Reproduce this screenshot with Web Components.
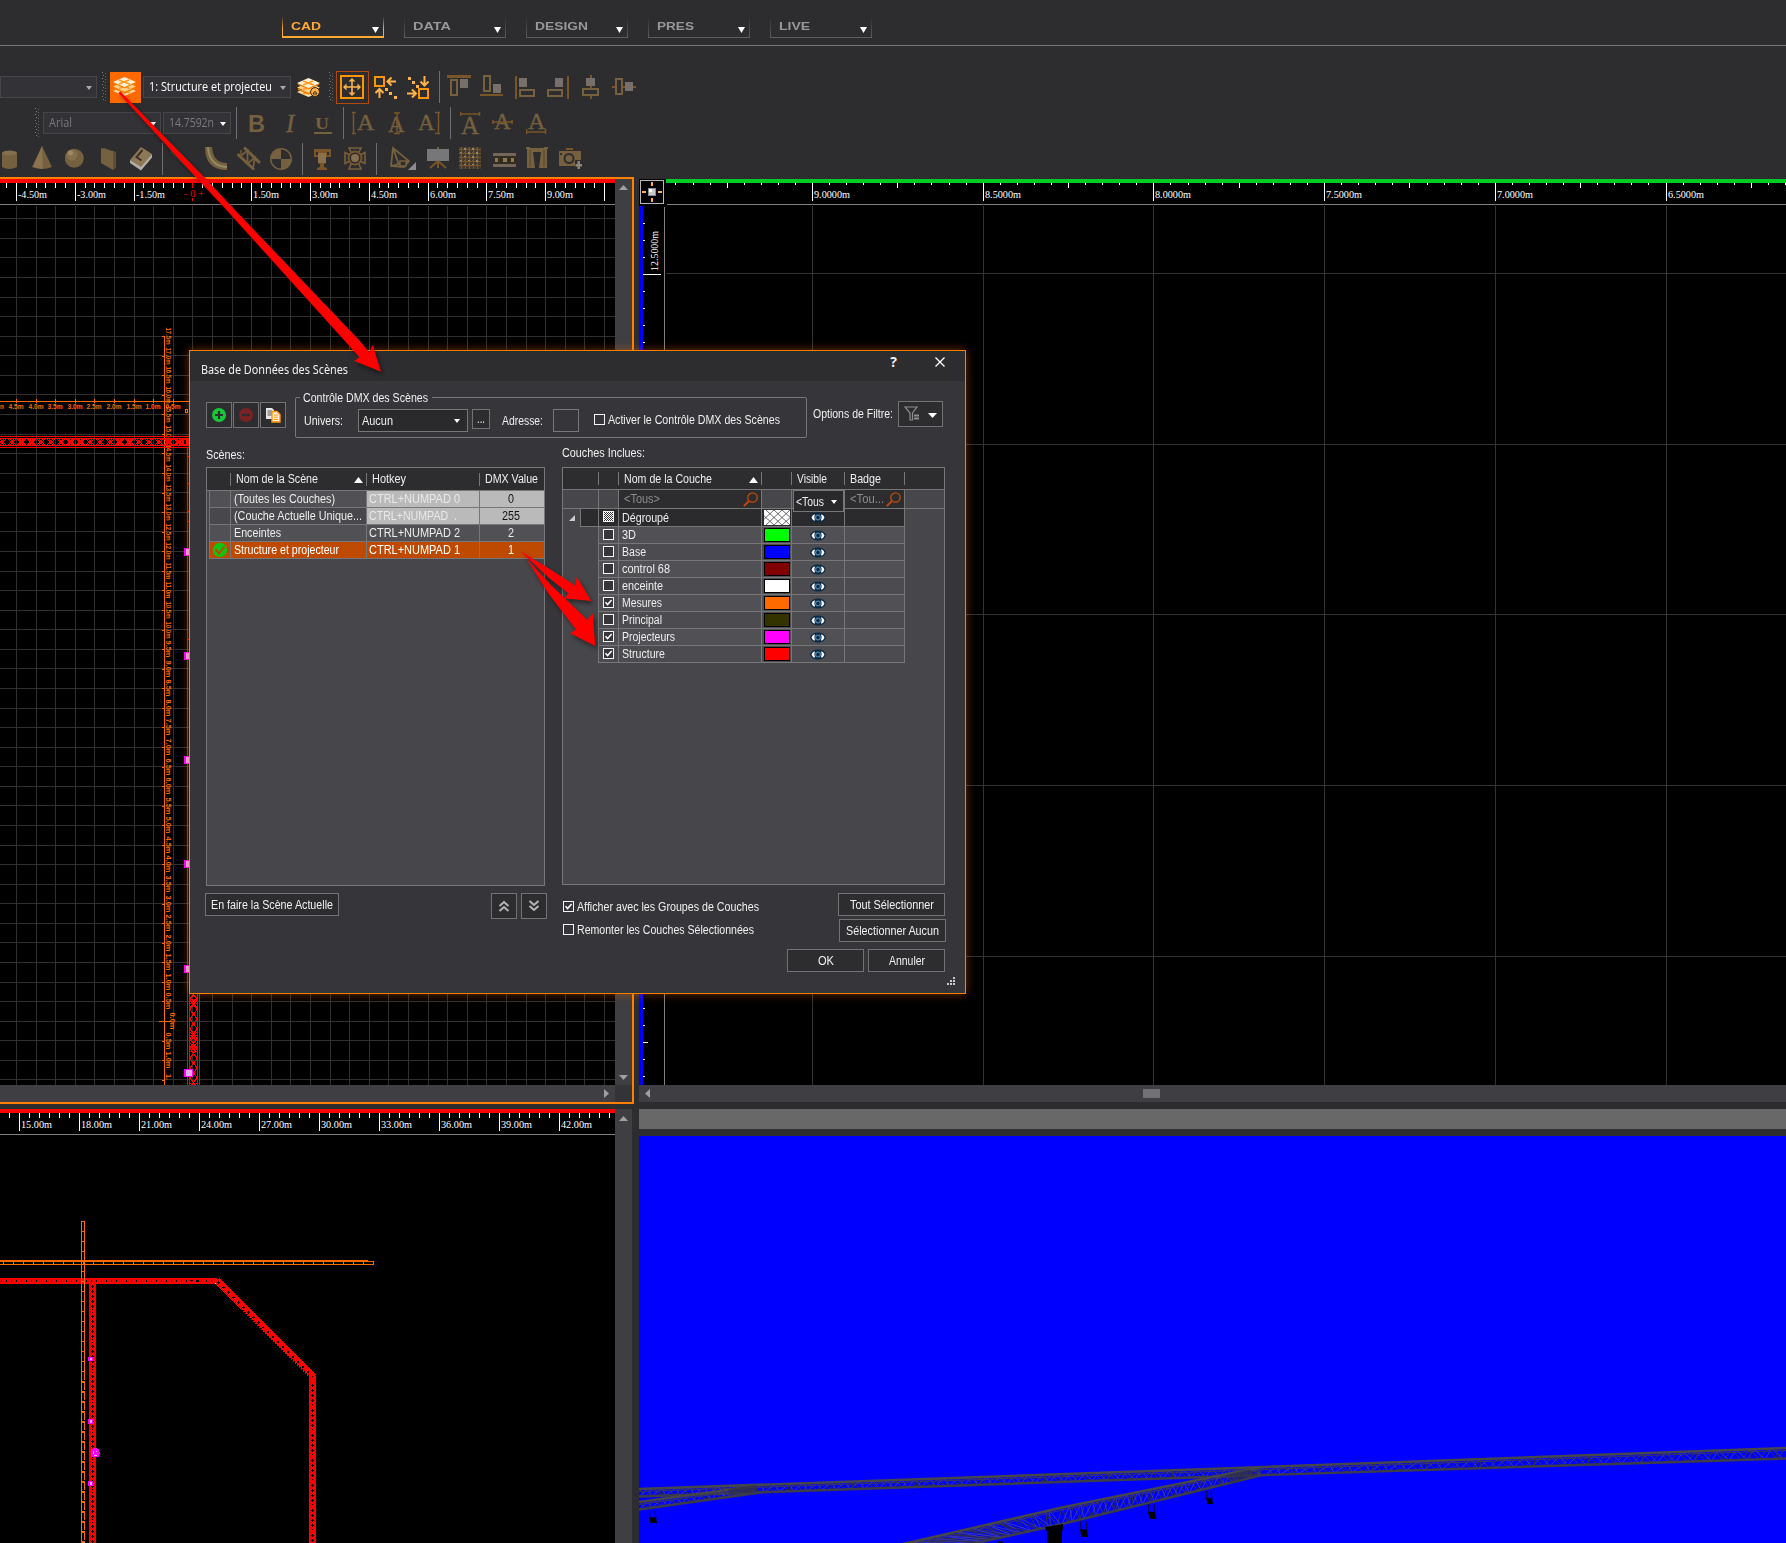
<!DOCTYPE html>
<html lang="fr"><head><meta charset="utf-8"><title>Base de Données des Scènes</title>
<style>
html,body{margin:0;padding:0;background:#2d2d2f;overflow:hidden}
body{width:1786px;height:1543px;position:relative;font-family:"Liberation Sans",sans-serif}
</style></head><body>
<cad-app></cad-app>
<script>
const define=(name,css,render)=>customElements.define(name,class extends HTMLElement{
  connectedCallback(){
    if(this.shadowRoot)return;
    const r=this.attachShadow({mode:'open'});
    r.innerHTML='<style>'+css+'</style>'+render(this);
  }
});
const range=(a,b)=>Array.from({length:b-a+1},(_,i)=>a+i);
const R=(x,y,w,h,f)=>`<rect x="${x}" y="${y}" width="${w}" height="${h}" fill="${f}"/>`;
const P=(d,f='none',s='none',w=1)=>`<path d="${d}" fill="${f}" stroke="${s}" stroke-width="${w}"/>`;

/* Text squeezed or stretched to a given width */
customElements.define('fit-text',class extends HTMLElement{
  connectedCallback(){
    if(this.shadowRoot)return;
    const w=+this.getAttribute('w');
    const r=this.attachShadow({mode:'open'});
    r.innerHTML=`<style>:host{display:inline-block;width:${w}px;white-space:nowrap;flex:none}span{display:inline-block;transform-origin:0 50%}</style><span><slot></slot></span>`;
    const s=r.querySelector('span'),m=s.offsetWidth&&s.getBoundingClientRect().width;
    if(m)s.style.transform=`scaleX(${w/m})`;
  }
});

/* ---------- mode tabs ---------- */
define('mode-tab',`:host{display:flex;box-sizing:border-box;width:102px;height:21px;align-items:flex-start;justify-content:space-between;padding:3px 4px 0 9px;
 font:bold 11.5px/13px "Liberation Sans",sans-serif;color:#979797;border:solid;border-width:0 1px 1px;border-image:linear-gradient(#2d2d2f,#5d5d5f) 1}
:host([active]){color:#ffa834;border-width:0 1px 2px;border-image:linear-gradient(#2d2d2f,#ffa834 60%) 1}
fit-text{margin-left:-1px}svg{display:block;margin-top:7px}`,
 ()=>`<slot></slot><svg width="7" height="6"><path d="M0 0H7L3.5 6Z" fill="#fff"/></svg>`);
define('mode-bar',`:host{display:flex;box-sizing:border-box;height:46px;border-bottom:1px solid #77777a;padding:17px 0 0 282px;gap:20px}fit-text{margin-left:-1px}`,
 ()=>[['CAD',30],['DATA',38],['DESIGN',53],['PRES',37],['LIVE',31]].map((t,i)=>`<mode-tab ${i?'':'active'}><fit-text w="${t[1]}">${t[0]}</fit-text></mode-tab>`).join(''));

/* ---------- toolbars ---------- */
define('tool-combo',`:host{display:flex;box-sizing:border-box;height:22px;border:1px solid #46464a;background:#333337;align-items:center;justify-content:space-between;padding:0 4px 1px 5px;
 font:12px "Open Sans",sans-serif;color:#7b7b7f}:host([on]){color:#fff}svg{display:block;margin:2px 0 0 auto}`,
 h=>`<slot></slot><svg width="6" height="4"><path d="M0 0H6L3 4Z" fill="${h.getAttribute('c')||'#aaa'}"/></svg>`);
const A='#ff9500',L='#ffb24a',D='#7a5528',T='#75603f',G='#77706a';
const grip=(x,y)=>range(0,9).map(i=>R(x+(i%2?1:0),y+i*3,1,1,'#77777b')+R(x+3,y+i*3+1,1,1,'#606064')).join('');
const sep=y=>x=>[x,1,R(x,y,1,32,'#6f6f72')];
const stack=(x,y,badge)=>{const one=(yy,c)=>P(`M${x} ${yy+5}L${x+11.5} ${yy}L${x+23} ${yy+5}L${x+11.5} ${yy+10}Z`,c)+P(`M${x+6} ${yy+3}l5 2 5-2M${x+6} ${yy+7}l5-2 6 2`,'none','#ff9a1c',1.6);
 return one(y+9,'#ffdca8')+P(`M${x+1} ${y+11}l10.5 5 10.5-5`,'none','#f08000',1.4)+one(y+4.5,'#ffd08a')+P(`M${x+1} ${y+6}l10.5 4.6 10.5-4.6`,'none','#f08000',1.4)+one(y,'#fff0d8')
 +(badge?`<circle cx="${x+18}" cy="${y+14}" r="4.4" fill="#ffb24a" stroke="#3a2a10"/>`+P(`M${x+16} ${y+16}q2-5 4 0z`,'none','#3a2a10',1):'')};
const letter=(x,y,s,t,extra='')=>`<text x="${x}" y="${y}" font-family="Liberation Serif,serif" font-size="${s}" fill="${T}" stroke="${T}" stroke-width=".4" ${extra}>${t}</text>`;
const ROWS={
1:[69,[
 [0,97,'<tool-combo style="width:97px"></tool-combo>'],
 [102,6,grip(102,72)],
 [110,31,R(110,72,31,31,'#ff6a00')+stack(113,77)],
 [143,148,'<tool-combo on style="width:148px"><fit-text w="123">1: Structure et projecteu</fit-text></tool-combo>'],
 [297,24,stack(297,78,1)],
 [329,6,grip(329,72)],
 [336,33,`<rect x="336.5" y="71.5" width="32" height="32" fill="none" stroke="#b04a10"/><rect x="341" y="76" width="22" height="22" fill="none" stroke="${A}" stroke-width="2"/>`+P('M352 79V95M344 87H360','none',L,1.6)+P('M348.500 81.5L352 78L355.500 81.5ZM348.500 92.500L352 96L355.500 92.500ZM346.500 83.500L343 87L346.500 90.500ZM357.500 83.500L361 87L357.500 90.500Z',L)],
 [374,24,`<rect x="375" y="77" width="9" height="9" fill="none" stroke="${A}" stroke-width="2"/>`+P('M387 81.5H396M391.500 77.500L387.500 81.500L391.500 85.500M379.500 98V89M375.500 93L379.500 89L383.500 93','none',L,2)+R(385,88,3,3,L)+R(389,92,3,3,L)+R(394,96,3,3,L)],
 [407,24,`<rect x="419" y="89" width="9" height="9" fill="none" stroke="${A}" stroke-width="2"/>`+P('M424.500 76V85M420.500 81.500L424.500 85.500L428.500 81.500M407 93.500H416M412 89.500L416 93.500L412 97.500','none',L,2)+R(408,77,3,3,L)+R(412,81,3,3,L)+R(416,85,3,3,L)],
 sep(71)(439),
 [447,25,R(447,75,24,3,D)+P('M451 80H457V95H451Z','none',T,2)+R(460,79,8,9,G)],
 [480,24,R(480,94,23,2,D)+P('M484 76H490V91H484Z','none',T,2)+R(493,84,8,9,G)],
 [515,21,R(515,76,2,23,D)+R(519,78,8,9,G)+P('M520 90H534V96H520Z','none',T,2)],
 [547,23,R(567,76,2,23,D)+R(555,78,8,9,G)+P('M548 90H562V96H548Z','none',T,2)],
 [582,18,R(590,75,2,24,D)+R(586,78,9,8,G)+P('M583 89H598V95H583Z','#2d2d2f',T,2)],
 [612,25,R(612,86,24,2,D)+P('M616 79H622V94H616Z','#2d2d2f',T,2)+R(625,82,8,9,G)]]],
2:[105,[
 [35,6,grip(35,108)],
 [43,118,'<tool-combo c="#fff" style="width:118px"><fit-text w="23">Arial</fit-text></tool-combo>'],
 [163,68,'<tool-combo c="#fff" style="width:68px"><fit-text w="45">14.7592n</fit-text></tool-combo>'],
 sep(107)(236),
 [248,17,`<text x="248" y="132" font-family="Liberation Sans" font-weight="bold" font-size="24" textLength="17" lengthAdjust="spacingAndGlyphs" fill="${T}">B</text>`],
 [284,15,letter(286,132,25,'I','font-style="italic"')],
 [313,20,`<text x="315" y="129" font-family="Liberation Serif" font-weight="bold" font-size="17" textLength="14" lengthAdjust="spacingAndGlyphs" fill="${T}">U</text>`+R(314,132,18,2,T)],
 sep(107)(343),
 [351,24,letter(357,130,24,'A')+P('M352 112.500H356M352 133.500H356M353.500 112V134','none',D,1.5)],
 [387,19,letter(388,132,23,'A')+P('M394 113H400M394 133.500H400M397 112V134','none',D,1.5)],
 [417,24,letter(418,130,23,'A')+P('M435 112.500H440M435 133.500H440M438.500 112V134','none',D,1.5)],
 sep(107)(450),
 [460,21,letter(461,134,25,'A')+P('M460 114H480M460.500 112V116M479.500 112V116','none',D,1.5)],
 [492,22,letter(494,129,23,'A')+P('M492 122H513M493 120V124M512 120V124','none',D,1.5)],
 [526,21,letter(528,129,24,'A')+P('M526 132H546M526.500 129V134M545.500 129V134','none',D,1.5)]]],
3:[141,[
 [1,17,P('M2 153V167Q9 171 17 167V153Z','#75603f')+'<ellipse cx="9.500" cy="153" rx="7.500" ry="2.500" fill="#85704e"/>'],
 [32,20,P('M42 146L52 167Q42 171 32 167Z','#75603f')+P('M42 146L43 169L33 167Z','#8a7350')],
 [65,19,'<circle cx="74.300" cy="158.300" r="9.500" fill="#75603f"/><circle cx="72" cy="155" r="5.500" fill="#85704d"/><circle cx="70.500" cy="153" r="2.500" fill="#a08a64"/>'],
 [100,17,P('M101 148L113 151V170L101 163Z','#75603f')+P('M101 148L105 148L116 152V168L113 170V151Z','#5e4e35')],
 [129,24,P('M130 160L141 147L152 154L141 168Z','#8d7858')+P('M130 160V163L141 170.500L152 157.500V154L141 167Z','#b3afa8')+P('M142.500 150L136.500 157L141.500 160.500','none','#3c3223',2)],
 sep(143)(162),
 [170,22,P('M171 151L191 170','none','#4c4132',3)],
 [205,23,P('M205 147H212Q213 163 227 163V170Q205 170 205 147Z','#75603f')+P('M208 147Q209 166 227 167','none','#918b64',2)],
 [237,24,P('M237.500 154L254 169.500M244 147.500L260 163','none',T,3)+P('M240 156.500L247.500 150.500V163.500L255 157.500L253 168','none',T,1.8)+P('M241 157V150','none',D,1.5)],
 [270,23,`<circle cx="281" cy="159" r="11" fill="${T}"/>`+P('M281 159V149.500A9.500 9.500 0 0 1 290.500 159ZM281 159V168.500A9.500 9.500 0 0 1 271.500 159Z','#2d2d2f')],
 sep(143)(302),
 [313,19,P('M314 149H331V157H326V163L324 164V167L327 168V170H317V168L320 167V164L318 163V157H314Z',D)+R(318,153,8,10,'#8a714c')+R(316,152,2,3,'#2d2d2f')+R(327,152,2,3,'#2d2d2f')],
 [343,24,'<circle cx="355" cy="158" r="6.500" fill="none" stroke="'+D+'" stroke-width="2"/><circle cx="355" cy="158" r="4" fill="#85704d"/>'+P('M351 152L349 148H361L359 152M351 164L349 169H361L359 164M349 154.500L345 152.500V163.500L349 161.500M361 154.500L365 152.500V163.500L361 161.500','none',T,1.6)],
 sep(143)(376),
 [390,27,P('M393 148L409 161L404 167L391 166ZM393 148L399 165M393 148L391 166M391 166L409 161','none',T,1.8)+P('M400 161H406V166H400Z','#2d2d2f',T,1.500)+P('M416 162V170H408Z','#8b8b8d')],
 [427,22,R(427,149,22,12,'#77777a')+R(437,147,2,2,T)+P('M438 161V168M438 161L430 168M438 161L446 168','none',D,2)],
 [459,23,R(459,147,22,22,'#46392b')+range(0,4).map(i=>R(461+i*4,147,1,22,'#80561f')+R(459,149+i*4,22,1,'#80561f')+range(0,4).map(j=>R(460+i*4,148+j*4,2,2,(i+j)%2?'#8d877d':'#6b583a')).join('')).join('')],
 [493,24,R(493,153,23,3,'#73665a')+R(493,164,23,3,'#73665a')+R(493,156,23,8,'#352c20')+R(495,158,3,4,'#8b7656')+R(503,158,4,4,'#8b7656')+R(511,158,3,4,'#8b7656')],
 [525,24,P('M526 147H530V148H544V147H548V149H547V168H539L541 152H533L535 168H527V149H526Z',T)+P('M530 150V167M544 150V167','none','#5a482f',1)],
 [559,23,R(566,148,7,2,D)+P('M559 151H581V166H559Z',T)+'<circle cx="569" cy="158.500" r="4.500" fill="none" stroke="#2d2d2f" stroke-width="2"/>'+R(560,153,2,2,'#2d2d2f')+R(575,160,8,11,'#2d2d2f')+R(575.500,164,6.500,2.500,'#8e8578')+R(577.500,161,2.500,8,'#8e8578')]]]
};
define('tool-row',`:host{display:flex;height:36px;align-items:flex-start}svg{display:block;flex:none}tool-combo{flex:none}`,h=>{
  const [y,items]=ROWS[h.getAttribute('n')];let end=0;
  return items.map(([x,w,c])=>{const m=x-end;end=x+w;
    return c.startsWith('<tool-combo')?c.replace('style="',`style="margin:7px 0 0 ${m}px;`)
      :`<svg width="${w}" height="36" style="margin-left:${m}px" viewBox="${x} ${y} ${w} 36">${c}</svg>`}).join('')});

/* ---------- drawing views ---------- */
const lab=(x,y,w,t,f='#fff',e='')=>`<text x="${x}" y="${y}" font-family="Liberation Serif,serif" font-size="11" fill="${f}" textLength="${w}" lengthAdjust="spacingAndGlyphs" ${e}>${t}</text>`;
const tiny=(x,y,t,e='',w=15)=>`<text x="${x}" y="${y}" font-family="Liberation Sans,sans-serif" font-weight="bold" font-size="6.500" fill="#ff6a00" text-anchor="middle" textLength="${w}" lengthAdjust="spacingAndGlyphs" ${e}>${t}</text>`;
const magenta=(x,y,w,h)=>R(x,y,w,h,'#f0f')+R(x+2,y+1,w-3,h-2,'#eeaaee');
function planView(){
  let s=R(0,179,615,906,'#000');
  range(0,30).forEach(k=>s+=R(Math.round(16+19.6*k),206,1,879,'#303030'));
  range(-5,39).forEach(k=>s+=R(0,Math.round(316.2+19.57*k),615,1,'#303030'));
  s+=R(0,179,615,4,'#f00')+R(0,204,615,1,'#808080');
  range(-1,60).forEach(k=>{const x=Math.round(16+9.8*k);s+=k==18?R(x,183,1,5,'#f00')+R(x,198,1,3,'#f00'):R(x,183,1,k%6?5:18,'#fff')});
  [-4.5,-3,-1.5,null,1.5,3,4.5,6,7.5,9].forEach((v,k)=>{if(v!==null)s+=lab(Math.round(16+58.8*k)+2,198,v<0?29:26,v.toFixed(2)+'m')});
  s+=lab(184,197,20,'- 0 +','#f00');
  /* dimension lines */
  s+=R(164,336,1,749,'#ff6a00')+R(0,401,189,1,'#ff6a00');
  range(0,38).forEach(k=>{const y=Math.round(336+19.57*k);s+=R(162,y,3,1,'#ff6a00');
    const v=Math.abs(17.5-.5*k).toFixed(1)+'m',x=k==35?170:166,cut=k==38;s+=tiny(0,0,cut?'1.':v,`transform="translate(${x} ${cut?y-3:y}) rotate(90)"`,cut?6:17)});
  s+=R(159,1021,12,1,'#ff6a00');
  range(0,8).forEach(k=>{const x=Math.round(16+19.6*k);s+=R(x,399,1,4,'#ff6a00')+tiny(x,409,(4.5-.5*k).toFixed(1)+'m')});
  s+=tiny(2,409,'m','',4)+'<rect x="185.500" y="409.500" width="2" height="3" fill="none" stroke="#ff6a00"/>';
  /* horizontal truss */
  s+=R(0,436,189,1,'#f00')+R(0,438,189,1,'#f00')+R(0,445,189,1,'#f00')+R(0,447,189,1,'#f00');
  range(0,19).forEach(k=>{const x=k*9.8-2;s+=P(`M${x} 439L${x+6} 445M${x+6} 439L${x} 445M${x+2} 439L${x+8} 445M${x+8} 439L${x+2} 445`,'none','#f00',1)});
  s+=R(62,438,1,8,'#f00')+R(179,438,1,8,'#f00')+R(182,439,7,6,'#f00')+R(184,440,2,4,'#000');
  /* vertical truss */
  s+=R(187,447,1,638,'#f00')+[456,483,511,521,639].map(y=>R(188,y,1,1,'#f00')).join('');
  s+=R(189,994,1,91,'#f00')+R(197,994,1,91,'#f00')+R(199,994,1,91,'#f00');
  range(0,9).forEach(k=>{const y=990+k*9.8;s+=P(`M190 ${y}L197 ${y+9}M197 ${y}L190 ${y+9}`,'none','#f00',1.2)});
  [998,1032,1043,1083].forEach(y=>s+=P(`M190 ${y}l7 6M197 ${y}l-7 6M190 ${y+3}l7 6M197 ${y+3}l-7 6`,'none','#f00',1));
  [548,652,756,860,965,1069].forEach((y,i)=>s+=magenta(184,y,i==5?9:7,8));
  return s;
}
function lowerPlan(){
  let s=R(0,1109,615,434,'#000')+R(0,1109,615,4,'#f00')+R(0,1134,615,1,'#808080');
  range(-1,59).forEach(k=>{s+=R(19+10*k,1113,1,k%6?5:18,'#fff')});
  range(0,9).forEach(k=>s+=lab(21+60*k,1128,31,(15+3*k).toFixed(2)+'m'));
  /* red frame */
  const f='#f00',k0='#000';
  s+=R(0,1278,217,6,f)+range(0,42).map(k=>R(1+5*k,1280,1,2,k0)).join('')+R(190,1280,3,1,k0)+R(197,1280,2,2,k0);
  s+=R(89,1284,7,259,f)+range(0,51).map(k=>k%6==5?R(92,1284+5*k,1,1,k0)+R(92,1287+5*k,1,1,k0):R(91,1286+5*k,3,1,k0)+R(92,1285+5*k,1,3,k0)).join('');
  s+=R(309,1376,7,167,f)+range(0,32).map(k=>k%5==4?R(312,1381+5*k,1,1,k0)+R(312,1384+5*k,1,1,k0):R(311,1385+5*k,3,1,k0)+R(312,1384+5*k,1,3,k0)).join('');
  s+=P('M215 1284L219 1278L316 1375L309 1378Z',f)+P('M218 1282L313 1377','none',k0,1.6).replace('/>',' stroke-dasharray="2 5"/>')+P('M217 1284.500L310 1377.500','none',k0,1).replace('/>',' stroke-dasharray="1 1.8"/>')+R(215,1283,1,1,'#fff');
  /* orange dimension ladders */
  const o='#ff6a00';
  s+=R(0,1260,368,2,o)+R(0,1264,374,1,o)+R(368,1261,6,1,o)+R(373,1261,1,4,o)+range(0,36).map(k=>R(3+10*k,1261,1,4,o)).join('');
  s+=R(81,1221,1,322,o)+R(84,1221,1,322,o)+range(0,32).map(k=>R(81,1221+10*k,4,1,o)+(k>15?R(81,1222+10*k,4,1,o)+R(83,1220+10*k,2,1,k0):'')).join('');
  s+=magenta(88,1357,5,4)+magenta(88,1419,5,5)+magenta(88,1481,5,5)+R(91,1449,8,8,'#f0f')+R(93,1448,4,1,'#f0f')+R(99,1452,1,2,'#f0f')+R(93,1451,1,3,'#eeaaee')+R(94,1455,3,1,'#eeaaee')+R(96,1451,1,1,'#eeaaee');
  return s;
}
function sectionView(){
  let s=R(639,179,1147,906,'#000');
  range(0,5).forEach(k=>s+=R(Math.round(812+170.7*k),206,1,879,'#333'));
  range(0,4).forEach(k=>s+=R(666,Math.round(273+170.7*k),1120,1,'#333'));
  s+=R(666,179,1120,4,'#00cc28')+R(667,204,1119,1,'#808080');
  range(-8,57).forEach(k=>{const x=Math.round(812+17.07*k);s+=R(x,183,1,k%10?(k%5?2:5):18,'#fff')});
  range(0,5).forEach(k=>s+=lab(Math.round(812+170.7*k)+2,198,36,(9-.5*k).toFixed(4)+'m'));
  s+=R(639,206,4,879,'#00f')+R(664,207,1,878,'#808080');
  range(-3,47).forEach(k=>s+=R(643,Math.round(274+17.07*k),k%10?(k%5?2:5):18,1,'#fff'));
  s+=lab(0,0,40,'12.5000m','#fff','transform="translate(658 271) rotate(-90)"');
  s+='<rect x="640.500" y="180.500" width="23" height="23" fill="#000" stroke="#b8b8b8"/>'+R(648,188,8,8,'#8d8d8d')+R(649,189,6,6,'#c9c9c9')+R(649,189,3,3,'#fff')+R(651,182,2,4,'#ffb040')+R(651,198,2,4,'#ffb040')+R(642,191,4,2,'#ffb040')+R(658,191,4,2,'#ffb040');
  return s;
}
function truss(t0,t1,b0,b1,n){
  const at=(a,b,u)=>[a[0]+(b[0]-a[0])*u,a[1]+(b[1]-a[1])*u].map(v=>v.toFixed(1)).join(' ');
  let z='M'+at(t0,t1,0),w='M'+at(b0,b1,0),v='';
  for(let i=1;i<=n;i++){z+='L'+(i%2?at(b0,b1,i/n):at(t0,t1,i/n));w+='L'+(i%2?at(t0,t1,(i+.35)/(n+1)):at(b0,b1,(i-.3)/n));if(i%3==0)v+='M'+at(t0,t1,i/n)+'L'+at(b0,b1,i/n)}
  return P(z,'none','#34344c',1)+P(w,'none','#4444a8',.8)+P(v,'none','#2c2c48',.9)
   +P(`M${t0}L${t1}`,'none','#46464a',2.6)+P(`M${b0}L${b1}`,'none','#3c3c48',2.4)+P(`M${t0[0]} ${t0[1]+2.5}L${t1[0]} ${t1[1]+2.5}`,'none','#33336a',1);
}
function scene3d(){
  const lamp=(x,y,w,h)=>P(`M${x+.5} ${y}L${x+1} ${y+h*.6}M${x+w-2} ${y}L${x+w-1} ${y+h*.6}`,'none','#08083a',1)+P(`M${x} ${y+h*.5}L${x+w-1} ${y+h*.55}L${x+w} ${y+h}L${x+1.5} ${y+h}Z`,'#000');
  return R(639,1136,1147,407,'#00f')
   +truss([639,1489],[1265,1467],[639,1496.500],[1265,1475],88)+truss([1265,1467],[1786,1448],[1265,1475],[1786,1458.500],58)
   +truss([639,1502],[756,1486],[639,1509.500],[760,1492.500],16)
   +P('M728 1489L756 1485L758 1492L730 1494Z','#2d2d48').replace('/>',' opacity=".75"/>')
   +truss([899,1545],[1062,1507.500],[965,1545.500],[1062,1524],20)+truss([1062,1507.500],[1262,1467],[1062,1524],[1262,1475],34)
   +P('M1226 1475L1250 1469L1256 1475L1230 1483Z','#2d2d44').replace('/>',' opacity=".6"/>')
   +lamp(649,1511,8,12)+lamp(1206,1491,7,13)+lamp(1148,1504,8,15)+lamp(1080,1521,8,16)+P('M1045 1527L1063 1524V1529L1062 1531V1543H1047V1532Z','#000')+R(998,1541,5,2,'#08083a');
}
const tri={up:'M0 5H9L4.5 0Z',down:'M0 0H9L4.5 5Z',left:'M5 0V9L0 4.500Z',right:'M0 0V9L5 4.500Z'};
define('scroll-arrow',`:host{display:block}svg{display:block}`,h=>{const d=h.getAttribute('dir'),v=d=='up'||d=='down';return `<svg width="${v?9:5}" height="${v?5:9}"><path d="${tri[d]}" fill="#a0a0a3"/></svg>`});
define('scroll-bar',`:host{display:flex;box-sizing:border-box;background:#3f3f43;width:17px;padding:7px 4px;flex-direction:column;align-items:center;justify-content:space-between}
:host([h]){width:auto;height:17px;flex-direction:row;padding:0 6px}i{width:17px;height:9px;background:#727274;margin-right:620px}`,
 h=>({v:'<scroll-arrow dir="up"></scroll-arrow><scroll-arrow dir="down"></scroll-arrow>',u:'<scroll-arrow dir="up"></scroll-arrow>',r:'<span></span><scroll-arrow dir="right"></scroll-arrow>',l:'<scroll-arrow dir="left"></scroll-arrow><i></i>'})[h.getAttribute('kind')]);
const VIEWS={plan:[0,179,615,906,planView],lower:[0,1109,615,434,lowerPlan],section:[639,179,1147,906,sectionView],scene:[639,1136,1147,407,scene3d]};
define('draw-view',`:host{display:block}svg{display:block}`,h=>{const [x,y,w,hh,f]=VIEWS[h.getAttribute('kind')];
 return `<svg width="${w}" height="${hh}" viewBox="${x} ${y} ${w} ${hh}" ${h.getAttribute('kind')=='scene'?'':'shape-rendering="crispEdges"'}>${f()}</svg>`});
define('work-area',`:host{display:flex;gap:5px;height:1366px}
.l{width:634px;display:flex;flex-direction:column;gap:5px}.r{flex:1;display:flex;flex-direction:column}
.top{box-sizing:border-box;height:927px;border:2px solid #ff8000;border-left:0;display:grid;grid-template:906px 17px/615px 17px}
.top scroll-bar[kind=v]{padding-top:6px;padding-bottom:5px}
.c{background:#343438}.bot{display:grid;grid-template:434px/615px 17px}.grey{height:20px;margin:7px 0;background:#686868}.r{padding-top:2px}`,
 ()=>`<div class="l"><div class="top"><draw-view kind="plan"></draw-view><scroll-bar kind="v"></scroll-bar><scroll-bar h kind="r"></scroll-bar><div class="c"></div></div>
 <div class="bot"><draw-view kind="lower"></draw-view><scroll-bar kind="u"></scroll-bar></div></div>
 <div class="r"><draw-view kind="section"></draw-view><scroll-bar h kind="l"></scroll-bar><div class="grey"></div><draw-view kind="scene"></draw-view></div>`);

/* ---------- dialog ---------- */
define('push-button',`:host{display:flex;box-sizing:border-box;align-items:center;justify-content:center;background:#2d2d30;border:1px solid #727274;color:#f0f0f0;height:23px;flex:none}`,()=>'<slot></slot>');
define('check-box',`:host{display:block;width:11px;height:11px;flex:none}svg{display:block}`,h=>{
 const m=h.getAttribute('state');
 return `<svg width="11" height="11"><rect x=".5" y=".5" width="10" height="10" fill="#35353a" stroke="#f4f4f4"/>${m=='on'?'<path d="M2.500 5.300L4.600 7.600L8.600 3" fill="none" stroke="#fff" stroke-width="1.500"/>':''}${m=='mix'?range(0,8).map(i=>range(0,8).map(j=>(i+j)%2?R(1+i,1+j,1,1,'#fff'):'').join('')).join(''):''}</svg>`});
define('scene-table',`:host{display:block;box-sizing:border-box;width:339px;height:419px;border:1px solid #77777a;background:#47474b;color:#eee}
.row{display:flex;margin-left:2px;height:17px;border-left:1px solid #77777a}
.row>div{box-sizing:border-box;border-right:1px solid #77777a;border-bottom:1px solid #77777a;background:#505055;padding-left:2.500px;line-height:17px;height:17px}
.row>div:nth-child(1){width:21px;padding:0}.row>div:nth-child(2){width:136px}.row>div:nth-child(3){width:113px;padding-left:2px}.row>div:nth-child(4){width:64px;border-right:0;padding:0 2px 0 0;display:flex;justify-content:center}
.row:nth-of-type(odd)>div{background:#47474c}
.row.g>div:nth-child(n+3){background:#bababa;color:#e9e9e9}.row.g>div:nth-child(4){color:#111}
.row.s>div{background:#bd4a00;color:#fff}
.head{display:flex;height:22px;background:#2d2d2f;border-bottom:1px solid #77777a;align-items:center}
.head div{box-sizing:border-box;height:13px;border-right:1px solid #77777a;display:flex;align-items:center;justify-content:space-between;padding:1px 3px 0 5px;line-height:13px}
.head div:nth-child(1){width:24px}.head div:nth-child(2){width:136px}.head div:nth-child(3){width:113px}.head div:nth-child(4){border:0}
svg{display:block}`,()=>`<div class="head"><div></div><div><fit-text w="82">Nom de la Scène</fit-text><svg width="9" height="6"><path d="M0 6H9L4.500 0Z" fill="#fff"/></svg></div><div><fit-text w="34">Hotkey</fit-text></div><div><fit-text w="53">DMX Value</fit-text></div></div>`
+[['(Toutes les Couches)',101,'CTRL+NUMPAD 0',91,'0',6,'g'],['(Couche Actuelle Unique...',128,'CTRL+NUMPAD&nbsp; .',88,'255',18,'g'],['Enceintes',47,'CTRL+NUMPAD 2',91,'2',6,''],['Structure et projecteur',105,'CTRL+NUMPAD 1',91,'1',6,'s']]
.map(r=>`<div class="row ${r[6]}"><div>${r[6]=='s'?'<svg width="20" height="16"><circle cx="10" cy="8" r="7.200" fill="#12c312"/><path d="M5.500 7.500L9 11.500L14.500 4.500" fill="none" stroke="#bd4a00" stroke-width="2"/></svg>':''}</div><div><fit-text w="${r[1]}">${r[0]}</fit-text></div><div><fit-text w="${r[3]}">${r[2]}</fit-text></div><div><fit-text w="${r[5]}">${r[4]}</fit-text></div></div>`).join(''));
const eye='<svg width="16" height="11"><path d="M0 5.500Q2 .5 8 .5T16 5.500Q14 10.500 8 10.500T0 5.500Z" fill="#0b2b45"/><path d="M1.500 5.500Q2.500 2.500 5 2.300Q3.500 5.500 5 8.700Q2.500 8.500 1.500 5.500ZM14.500 5.500Q13.500 2.500 11 2.300Q12.500 5.500 11 8.700Q13.500 8.500 14.500 5.500Z" fill="#fff"/><circle cx="8" cy="5.500" r="3" fill="#4c7ea5"/><circle cx="8" cy="5.500" r="1.700" fill="#0b2b45"/></svg>';
const mag='<svg width="15" height="15"><circle cx="9.500" cy="5.500" r="4.700" fill="none" stroke="#c24a0c" stroke-width="1.300"/><path d="M6 9L.8 14.200" stroke="#c24a0c" stroke-width="1.800"/></svg>';
define('layer-table',`:host{display:block;position:relative;box-sizing:border-box;width:383px;height:418px;border:1px solid #77777a;background:#47474b;color:#eee}
.row{display:flex;margin-left:35px;width:307px;height:17px;border-left:1px solid #77777a;box-sizing:border-box}
.row>div,.fil>div{box-sizing:border-box;border-right:1px solid #77777a;border-bottom:1px solid #77777a;background:#505055;height:100%;line-height:17px;flex:none}
.k{width:20px;padding:2px 0 0 4px}.n{width:143px;padding-left:3px}.w{width:30px;padding:1px 1px 0 2px}.v{width:53px;display:flex;justify-content:center;padding-top:3px}.b{width:60px}
.row:nth-of-type(odd)>div{background:#4b4b50}
.grp{margin-left:0;border:0;width:342px;height:18px}.row.grp>div{background:#2b2b2d}.row.grp .n{line-height:18px}.row.grp>.t{width:18px;background:none;border-bottom:0;padding:6px 0 0 6px}.row.grp>.p{width:18px}
.head{display:flex;height:21px;background:#2d2d2f;border-bottom:1px solid #77777a;align-items:center}
.head div{box-sizing:border-box;height:13px;border-right:1px solid #77777a;display:flex;align-items:center;justify-content:space-between;padding:2px 3px 0 5px;flex:none;line-height:13px}
.fil{display:flex;height:19px}.row svg,.head svg,.fil svg{display:block;flex:none}
.fil>div{background:#47474b;display:flex;align-items:center;justify-content:space-between;padding:0 3px 0 5px}
.fil>.d{background:#2d2d30;color:#8d8d8f}
.pick{position:absolute;left:230px;top:22px;width:51px;height:22px;box-sizing:border-box;border:1px solid #77777a;background:#29292c;display:flex;align-items:center;justify-content:space-between;padding:1px 6px 0 2px}
.sw{height:14px;width:26px;box-sizing:border-box;border:1px solid #000}`,()=>{
 const row=(n,w,c,st,g)=>`<div class="row ${g?'grp':''}">${g?'<div class="t"><svg width="6" height="6"><path d="M6 0V6H0Z" fill="#ccc"/></svg></div><div class="p"></div>':''}<div class="k"><check-box state="${st}"></check-box></div><div class="n"><fit-text w="${w}">${n}</fit-text></div><div class="w">${g?`<svg width="26" height="15"><rect width="26" height="15" fill="#fff"/><path d="M-2 4L10 15M2 0L18 15M10 0L26 15M18 0L28 9M-2 11L10 0M2 15L18 0M10 15L26 0M18 15L28 6" stroke="#444" stroke-width=".8"/></svg>`:`<div class="sw" style="background:${c}"></div>`}</div><div class="v">${eye}</div><div class="b"></div></div>`;
 return `<div class="head"><div style="width:36px"></div><div style="width:20px"></div><div style="width:143px"><fit-text w="88">Nom de la Couche</fit-text><svg width="9" height="6"><path d="M0 6H9L4.500 0Z" fill="#fff"/></svg></div><div style="width:30px"></div><div style="width:53px"><fit-text w="30">Visible</fit-text></div><div style="width:60px"><fit-text w="31">Badge</fit-text></div></div>
 <div class="fil"><div style="width:36px"></div><div style="width:20px"></div><div class="d" style="width:143px"><fit-text w="36">&lt;Tous&gt;</fit-text>${mag}</div><div style="width:30px"></div><div style="width:53px"></div><div class="d" style="width:60px"><fit-text w="34">&lt;Tou...</fit-text>${mag}</div><div style="width:39px;border-right:0"></div></div>`
 +row('Dégroupé',47,'','mix',1)+[['3D',14,'#0f0'],['Base',24,'#00f'],['control 68',48,'#800000'],['enceinte',41,'#fff'],['Mesures',40,'#ff6a00','on'],['Principal',40,'#333300'],['Projecteurs',53,'#f0f','on'],['Structure',43,'#f00','on']].map(r=>row(r[0],r[1],r[2],r[3]||'off')).join('')
 +`<div class="pick"><fit-text w="28">&lt;Tous</fit-text><svg width="6" height="4"><path d="M0 0H6L3 4Z" fill="#fff"/></svg></div>`});
define('scene-dialog',`:host{position:absolute;left:189px;top:350px;width:777px;height:644px;box-sizing:border-box;border:1px solid #ff8000;background:#35353a;box-shadow:0 0 9px rgba(255,100,0,.45);color:#f0f0f0;font:12px/14px "Liberation Sans",sans-serif;display:flex;flex-direction:column}
.title{height:30px;background:#2d2d30;display:flex;padding:0 20px 0 11px;font:12px/37px "Noto Sans",sans-serif}
.title svg{margin:6px 0 0 38px;flex:none}.title b{margin-left:auto;font:bold 14px/22px "Open Sans",sans-serif}
.ctl{display:flex;margin:16px 0 0 16px;height:41px;align-items:flex-start}
.ctl>push-button{width:26px;height:26px;margin:5px 1px 0 0}
.grp{box-sizing:border-box;width:512px;height:41px;margin-left:8px;border:1px solid #77777a;border-radius:2px;padding-left:4px}
.grp .leg{display:block;width:132px;height:14px;margin-top:-7px;background:#35353a;padding-left:3px;box-sizing:border-box}
.grp .r{display:flex;height:23px;margin:4px 0 0 4px;align-items:flex-start;line-height:24px}
.combo{box-sizing:border-box;width:110px;height:23px;border:1px solid #77777a;background:#2a2a2d;margin-left:15px;display:flex;align-items:center;justify-content:space-between;padding:1px 7px 0 3px;line-height:20px}
.in{box-sizing:border-box;width:26px;height:23px;border:1px solid #77777a;margin-left:10px}
.cols{display:flex;margin-left:15px;gap:16px}.lc{width:340px}.rc{width:385px}
.lab{height:29px;box-sizing:border-box;padding:10px 0 0 1px}.rc .lab{padding-top:8px}
scene-table,layer-table{margin-left:1px}
.lb{display:flex;margin-top:7px;align-items:flex-start}.lb push-button+push-button{width:26px;height:26px}
.rb{display:flex;justify-content:space-between;margin:8px 0 0 2px}
.ck{display:flex;align-items:center;gap:3px;height:11px;margin:8px 0 12px}
.ok{display:flex;justify-content:flex-end;gap:4px;margin:2px 1px 0 0}.ok push-button{width:77px}
.grip{align-self:flex-end;margin:5px 10px 0 0;display:block}`,()=>`
<div class="title"><fit-text w="147">Base de Données des Scènes</fit-text><b>?</b><svg width="10" height="10"><path d="M.5 .5L9.500 9.500M9.500 .5L.5 9.500" stroke="#fff" stroke-width="1.300"/></svg></div>
<div class="ctl">
<push-button><svg width="16" height="16"><circle cx="8" cy="8" r="7" fill="#18c838"/><path d="M8 4V12M4 8H12" stroke="#2d2d30" stroke-width="2.200"/></svg></push-button>
<push-button><svg width="16" height="16"><circle cx="8" cy="8" r="7" fill="#7a2224"/><path d="M4 8H12" stroke="#2d2d30" stroke-width="2.200"/></svg></push-button>
<push-button><svg width="16" height="16"><path d="M1 1H7L9 3V12H1Z" fill="#e8e8e8"/><path d="M2.500 4H7M2.500 6H7M2.500 8H7" stroke="#555"/><path d="M7 4.500H12L15 7.500V15H7Z" fill="#fff0dc" stroke="#ff9500" stroke-width="1.400"/><path d="M9 8H13M9 10.200H13M9 12.400H13" stroke="#ff9500"/></svg></push-button>
<div class="grp"><span class="leg"><fit-text w="125">Contrôle DMX des Scènes</fit-text></span>
<div class="r"><fit-text w="39">Univers:</fit-text><div class="combo"><fit-text w="31">Aucun</fit-text><svg width="6" height="4"><path d="M0 0H6L3 4Z" fill="#fff"/></svg></div><push-button style="width:18px;height:20px;margin-left:4px;line-height:16px"><fit-text w="8">...</fit-text></push-button><fit-text w="41" style="margin-left:12px">Adresse:</fit-text><div class="in"></div><check-box state="off" style="margin:5px 3px 0 15px"></check-box><fit-text w="172" style="line-height:23px">Activer le Contrôle DMX des Scènes</fit-text></div></div>
<fit-text w="80" style="margin:10px 5px 0 6px">Options de Filtre:</fit-text>
<push-button style="width:45px;margin-top:4px"><svg width="34" height="18"><path d="M1 2H13L8.500 8V15H6V8Z" fill="none" stroke="#8d8d8f" stroke-width="1.200"/><path d="M10 10.500H15M10 13.500H15" stroke="#8d8d8f" stroke-width="2"/><path d="M24 8H33L28.500 13Z" fill="#fff"/></svg></push-button>
</div>
<div class="cols"><div class="lc"><div class="lab"><fit-text w="39">Scènes:</fit-text></div><scene-table></scene-table>
<div class="lb"><push-button style="width:134px"><fit-text w="122">En faire la Scène Actuelle</fit-text></push-button><push-button style="margin-left:152px"><svg width="12" height="12"><path d="M1.500 6L6 2L10.500 6M1.500 11L6 7L10.500 11" fill="none" stroke="#b4b4b4" stroke-width="2"/></svg></push-button><push-button style="margin-left:4px"><svg width="12" height="12"><path d="M1.500 1L6 5L10.500 1M1.500 6L6 10L10.500 6" fill="none" stroke="#b4b4b4" stroke-width="2"/></svg></push-button></div></div>
<div class="rc"><div class="lab"><fit-text w="83">Couches Inclues:</fit-text></div><layer-table></layer-table>
<div class="rb"><div><div class="ck"><check-box state="on"></check-box><fit-text w="182">Afficher avec les Groupes de Couches</fit-text></div><div class="ck"><check-box state="off"></check-box><fit-text w="177">Remonter les Couches Sélectionnées</fit-text></div></div>
<div><push-button style="width:107px"><fit-text w="84">Tout Sélectionner</fit-text></push-button><push-button style="width:107px;margin:3px 0 0 1px"><fit-text w="93">Sélectionner Aucun</fit-text></push-button></div></div>
<div class="ok"><push-button><fit-text w="16">OK</fit-text></push-button><push-button><fit-text w="36">Annuler</fit-text></push-button></div></div></div>
<svg class="grip" width="8" height="8">${[[6,0],[6,3],[3,3],[6,6],[3,6],[0,6]].map(p=>R(p[0],p[1],2,2,'#ccc')).join('')}</svg>`);

define('callout-arrows',`:host{position:absolute;left:0;top:0;pointer-events:none}svg{display:block;filter:drop-shadow(2px 3px 2px rgba(0,0,0,.45))}`,
 ()=>`<svg width="700" height="700" fill="#f00"><path d="M118.500 93L120.500 91.500L205 178L235 210L359 340L369.500 352.700L372.700 345L381 371.700L354.300 361L359.300 357.300L344 340L226.500 210L196.500 178Z"/><path d="M519.500 550.500L549 568.500L575.300 585.500L576.700 576.700L591.300 601L564 598.300L568.500 593.500L549 578Z"/><path d="M526 558L551 585L587.500 620L592.700 613.300L595.300 646L570 633.300L576 629.500L548 593Z"/></svg>`);
define('cad-app',`:host{display:block;width:1786px;height:1543px;background:#2d2d2f}mode-bar{margin-bottom:23px}`,
 ()=>`<mode-bar></mode-bar><tool-row n="1"></tool-row><tool-row n="2"></tool-row><tool-row n="3"></tool-row><work-area></work-area><scene-dialog></scene-dialog><callout-arrows></callout-arrows>`);
</script>
</body></html>
